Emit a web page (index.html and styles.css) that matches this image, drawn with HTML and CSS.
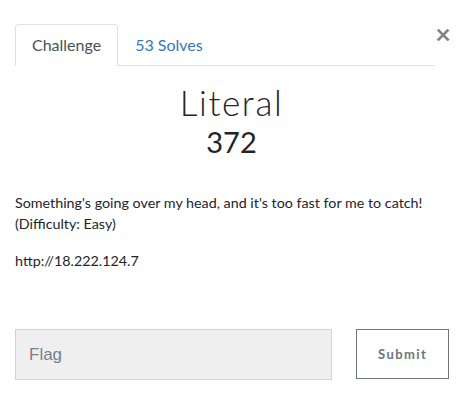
FILE: index.html
```html
<!DOCTYPE html>
<html>
<head>
<meta charset="utf-8">
<link rel="stylesheet" href="styles.css">
</head>
<body>
<div class="modal">
  <button class="close" aria-label="Close">&times;</button>
  <ul class="tabs">
    <li class="tab active">Challenge</li>
    <li class="tab link">53 Solves</li>
  </ul>
  <div class="content">
    <h2 class="title">Literal</h2>
    <h3 class="value">372</h3>
    <div class="desc">
      <p>Something's going over my head, and it's too fast for me to catch!<br>(Difficulty: Easy)</p>
      <p>http://18.222.124.7</p>
    </div>
    <form class="flag-row">
      <input class="flag-input" type="text" placeholder="Flag">
      <button class="submit" type="button">Submit</button>
    </form>
  </div>
</div>
</body>
</html>
```
FILE: styles.css
```css
* { box-sizing: border-box; }
html, body { margin: 0; background: #fff; }
body {
  font-family: Lato, "Noto Sans", sans-serif;
  color: #212529;
  font-size: 14px;
  line-height: 1.5;
}
.modal {
  position: relative;
  padding: 24px 20px 0 15px;
}
.close {
  position: absolute;
  top: 20px;
  right: 17px;
  background: none;
  border: 0;
  padding: 0;
  font-family: Lato, sans-serif;
  font-size: 27px;
  font-weight: 700;
  line-height: 1;
  color: #6c6c6c;
  opacity: 0.85;
}
.tabs {
  list-style: none;
  margin: 0;
  padding: 0;
  display: flex;
  width: 420px;
  border-bottom: 1px solid #dee2e6;
}
.tab {
  font-size: 16px;
  line-height: 24px;
  padding: 8px 16px;
  border: 1px solid transparent;
  border-top-left-radius: 4px;
  border-top-right-radius: 4px;
  margin-bottom: -1px;
}
.tab.active {
  color: #495057;
  border-color: #dee2e6 #dee2e6 #fff;
  background: #fff;
}
.tab.link { color: #337ab7; }
.content { padding-top: 14px; }
.title {
  margin: 0;
  text-align: center;
  font-weight: 300;
  font-size: 35px;
  line-height: 44px;
  letter-spacing: 1.6px;
}
.value {
  margin: 0;
  text-align: center;
  font-weight: 400;
  font-size: 29px;
  line-height: 36px;
}
.desc { padding-top: 32px; font-size: 14.3px; line-height: 21px; }
.desc p { margin: 0 0 16px; }
.flag-row {
  display: flex;
  gap: 24px;
  margin-top: 58px;
  width: 434px;
}
.flag-input {
  width: 318px;
  height: 51px;
  background: #efefef;
  border: 1px solid #d3d3d3;
  padding: 0 13px;
  font-family: "Liberation Sans", Arial, sans-serif;
  font-size: 17px;
  color: #495057;
}
.flag-input::placeholder { color: #7a8088; }
.submit {
  width: 93px;
  height: 50px;
  background: #fff;
  border: 1px solid #6c757d;
  font-family: Lato, sans-serif;
  font-weight: 700;
  font-size: 13px;
  letter-spacing: 1.4px;
  color: #6c757d;
}
```
